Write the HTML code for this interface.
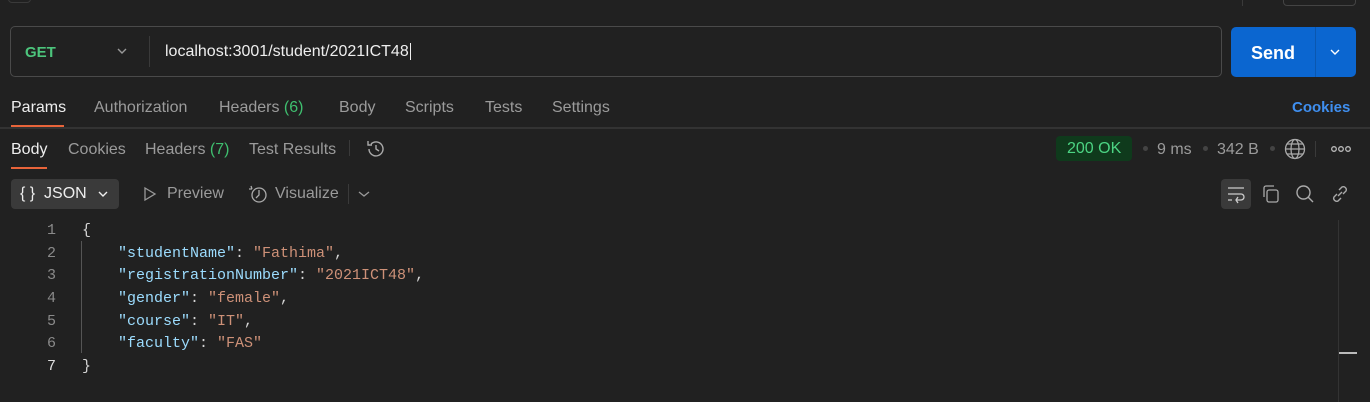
<!DOCTYPE html>
<html><head><style>
*{margin:0;padding:0;box-sizing:border-box}
body{width:1370px;height:402px;background:#212121;font-family:"Liberation Sans",sans-serif;color:#9b9b9b;position:relative;overflow:hidden;font-size:16px}
.a{position:absolute;white-space:nowrap}
.g{color:#3fbf6f}
.mono{font-family:"Liberation Mono",monospace;font-size:15px}
.k{color:#9cdcfe}.s{color:#ce9178}.p{color:#d4d4d4}
</style></head><body>
<div class="a" style="left:8px;top:-6px;width:23px;height:9px;border:1px solid #3a3a3a;border-radius:4px"></div>
<div class="a" style="left:1283px;top:-6px;width:73px;height:12px;border:1px solid #444;border-radius:4px"></div>
<div class="a" style="left:1242px;top:0;width:1px;height:6px;background:#3a3a3a"></div>
<div class="a" style="left:10px;top:26px;width:1212px;height:51px;border:1px solid #4a4a4a;border-radius:5px"></div>
<div class="a g" style="left:25px;top:44px;font-weight:bold;font-size:15px;color:#4cc47c">GET</div>
<svg class="a" style="left:116px;top:46px" width="12" height="10"><path d="M2 3l4 4 4-4" stroke="#999" fill="none" stroke-width="1.4"/></svg>
<div class="a" style="left:149px;top:36px;width:1px;height:31px;background:#3a3a3a"></div>
<div class="a" style="left:165px;top:43px;color:#eee;font-size:16px">localhost:3001/student/2021ICT48<span style="border-left:1px solid #eee;margin-left:1px"></span></div>
<div class="a" style="left:1231px;top:27px;width:125px;height:50px;background:#0b66d0;border-radius:5px"></div>
<div class="a" style="left:1315px;top:27px;width:1px;height:50px;background:#0a57b0"></div>
<div class="a" style="left:1251px;top:43px;color:#fff;font-weight:bold;font-size:18px">Send</div>
<svg class="a" style="left:1329px;top:47px" width="12" height="10"><path d="M2 3l4 4 4-4" stroke="#fff" fill="none" stroke-width="1.4"/></svg>
<div class="a" style="left:11px;top:99px;color:#eee">Params</div>
<div class="a" style="left:11px;top:125px;width:53px;height:2px;background:#e8643a"></div>
<div class="a" style="left:94px;top:99px">Authorization</div>
<div class="a" style="left:219px;top:99px">Headers <span class="g">(6)</span></div>
<div class="a" style="left:339px;top:99px">Body</div>
<div class="a" style="left:405px;top:99px">Scripts</div>
<div class="a" style="left:485px;top:99px">Tests</div>
<div class="a" style="left:552px;top:99px">Settings</div>
<div class="a" style="left:1292px;top:99px;color:#3f8ff0;font-weight:bold;font-size:15px">Cookies</div>
<div class="a" style="left:0;top:127px;width:1370px;height:2px;background:#333"></div>
<div class="a" style="left:11px;top:141px;color:#eee">Body</div>
<div class="a" style="left:11px;top:167px;width:36px;height:2px;background:#e8643a"></div>
<div class="a" style="left:68px;top:141px">Cookies</div>
<div class="a" style="left:145px;top:141px">Headers <span class="g">(7)</span></div>
<div class="a" style="left:249px;top:141px">Test Results</div>
<div class="a" style="left:349px;top:140px;width:1px;height:16px;background:#3a3a3a"></div>
<svg class="a" style="left:365px;top:138px" width="22" height="22" fill="none" stroke="#aaa" stroke-width="1.4"><path d="M4 11a7 7 0 1 0 2-5M3 3v4h4M11 7v4l3 2"/></svg>
<div class="a" style="left:1056px;top:136px;width:76px;height:25px;background:#0f3a1c;border-radius:4px"></div>
<div class="a" style="left:1067px;top:140px;color:#4cd483">200 OK</div>
<div class="a" style="left:1143px;top:146px;width:5px;height:5px;border-radius:50%;background:#444"></div>
<div class="a" style="left:1157px;top:141px">9 ms</div>
<div class="a" style="left:1203px;top:146px;width:5px;height:5px;border-radius:50%;background:#444"></div>
<div class="a" style="left:1217px;top:141px">342 B</div>
<div class="a" style="left:1270px;top:146px;width:5px;height:5px;border-radius:50%;background:#444"></div>
<svg class="a" style="left:1284px;top:138px" width="22" height="22" fill="none" stroke="#aaa" stroke-width="1.3"><circle cx="11" cy="11" r="9.5"/><ellipse cx="11" cy="11" rx="4" ry="9.5"/><path d="M1.5 11h19M3 6h16M3 16h16"/></svg>
<div class="a" style="left:1315px;top:141px;width:1px;height:16px;background:#3a3a3a"></div>
<svg class="a" style="left:1331px;top:145px" width="22" height="8" fill="none" stroke="#bbb" stroke-width="1.3"><circle cx="3" cy="4" r="2.3"/><circle cx="10" cy="4" r="2.3"/><circle cx="17" cy="4" r="2.3"/></svg>
<div class="a" style="left:11px;top:179px;width:108px;height:30px;background:#3a3a3a;border-radius:4px"></div>
<div class="a" style="left:20px;top:185px;color:#eee;font-size:16px">{ }&nbsp;&nbsp;JSON</div>
<svg class="a" style="left:98px;top:190px" width="10" height="8"><path d="M1 2l4 4 4-4" stroke="#eee" fill="none" stroke-width="1.4"/></svg>
<svg class="a" style="left:143px;top:186px" width="14" height="16"><path d="M2 2l10 6-10 6z" stroke="#999" fill="none" stroke-width="1.3"/></svg>
<div class="a" style="left:167px;top:185px">Preview</div>
<svg class="a" style="left:247px;top:183px" width="22" height="22" fill="none" stroke="#aaa" stroke-width="1.3"><circle cx="12" cy="12" r="7"/><path d="M12 7v5l-3 3M4 3l1 3M2 6l3 0"/></svg>
<div class="a" style="left:275px;top:185px">Visualize</div>
<div class="a" style="left:348px;top:184px;width:1px;height:20px;background:#3a3a3a"></div>
<svg class="a" style="left:358px;top:190px" width="12" height="8"><path d="M1 2l5 4 5-4" stroke="#999" fill="none" stroke-width="1.3"/></svg>
<div class="a" style="left:1221px;top:179px;width:30px;height:30px;background:#3a3a3a;border-radius:4px"></div>
<svg class="a" style="left:1226px;top:184px" width="20" height="20" fill="none" stroke="#ccc" stroke-width="1.3"><path d="M2 4h16M2 10h13a3 3 0 0 1 0 6H10M12 13l-2 3 2 3M2 16h4"/></svg>
<svg class="a" style="left:1261px;top:184px" width="20" height="20" fill="none" stroke="#aaa" stroke-width="1.3"><rect x="6" y="6" width="11" height="12" rx="2"/><path d="M3 13V4a2 2 0 0 1 2-2h8"/></svg>
<svg class="a" style="left:1295px;top:184px" width="20" height="20" fill="none" stroke="#aaa" stroke-width="1.4"><circle cx="8.5" cy="8.5" r="6.5"/><path d="M13 13l5 5"/></svg>
<svg class="a" style="left:1330px;top:184px" width="20" height="20" fill="none" stroke="#aaa" stroke-width="1.4"><path d="M8 12l4-4M7 10l-3 3a3 3 0 0 0 4 4l3-3M13 10l3-3a3 3 0 0 0-4-4l-3 3"/></svg>
<div class="a mono" style="left:0;top:220px;line-height:22.67px;width:56px;text-align:right;color:#8a8a8a">1<br>2<br>3<br>4<br>5<br>6<br><span style="color:#ddd">7</span></div>
<div class="a" style="left:81px;top:241px;width:1px;height:112px;background:#555"></div>
<div class="a mono" style="left:82px;top:220px;line-height:22.67px"><span class="p">{</span><br>
<span style="padding-left:36px"></span><span class="k">"studentName"</span><span class="p">: </span><span class="s">"Fathima"</span><span class="p">,</span><br>
<span style="padding-left:36px"></span><span class="k">"registrationNumber"</span><span class="p">: </span><span class="s">"2021ICT48"</span><span class="p">,</span><br>
<span style="padding-left:36px"></span><span class="k">"gender"</span><span class="p">: </span><span class="s">"female"</span><span class="p">,</span><br>
<span style="padding-left:36px"></span><span class="k">"course"</span><span class="p">: </span><span class="s">"IT"</span><span class="p">,</span><br>
<span style="padding-left:36px"></span><span class="k">"faculty"</span><span class="p">: </span><span class="s">"FAS"</span><br>
<span class="p">}</span></div>
<div class="a" style="left:1338px;top:220px;width:1px;height:182px;background:#333"></div>
<div class="a" style="left:1339px;top:352px;width:18px;height:2px;background:#bbb"></div>
</body></html>
